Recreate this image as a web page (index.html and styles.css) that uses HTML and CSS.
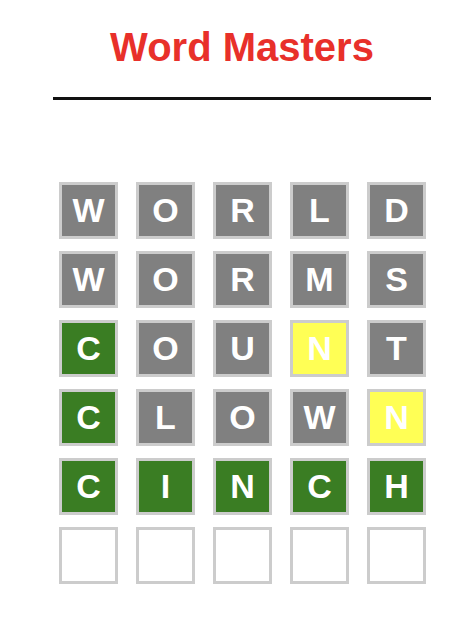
FILE: index.html
```html
<!DOCTYPE html>
<html>
<head>
<meta charset="utf-8">
<link rel="stylesheet" href="styles.css">
</head>
<body>
<div class="page">
  <h1 class="title">Word Masters</h1>
  <div class="rule"></div>
  <div class="board">
    <div class="tile wrong">W</div><div class="tile wrong">O</div><div class="tile wrong">R</div><div class="tile wrong">L</div><div class="tile wrong">D</div>
    <div class="tile wrong">W</div><div class="tile wrong">O</div><div class="tile wrong">R</div><div class="tile wrong">M</div><div class="tile wrong">S</div>
    <div class="tile correct">C</div><div class="tile wrong">O</div><div class="tile wrong">U</div><div class="tile close">N</div><div class="tile wrong">T</div>
    <div class="tile correct">C</div><div class="tile wrong">L</div><div class="tile wrong">O</div><div class="tile wrong">W</div><div class="tile close">N</div>
    <div class="tile correct">C</div><div class="tile correct">I</div><div class="tile correct">N</div><div class="tile correct">C</div><div class="tile correct">H</div>
    <div class="tile"></div><div class="tile"></div><div class="tile"></div><div class="tile"></div><div class="tile"></div>
  </div>
</div>
</body>
</html>
```
FILE: styles.css
```css
html, body {
  margin: 0;
  background: #fff;
  font-family: "Liberation Sans", Arial, sans-serif;
}
.page {
  width: 378px;
  padding: 24px 0 0 53px;
}
.title {
  margin: 0;
  font-size: 40px;
  line-height: 46px;
  font-weight: bold;
  text-align: center;
  color: #e8302a;
}
.rule {
  margin-top: 27px;
  height: 3px;
  background: #111;
}
.board {
  margin: 82px 0 0 6px;
  display: grid;
  grid-template-columns: repeat(5, 59px);
  grid-auto-rows: 57px;
  column-gap: 18px;
  row-gap: 12px;
}
.tile {
  box-sizing: border-box;
  border: 3px solid #ccc;
  display: flex;
  align-items: center;
  justify-content: center;
  font-size: 34px;
  font-weight: bold;
  color: #fff;
}
.wrong { background: #808080; }
.correct { background: #3a7d23; }
.close { background: #ffff55; }
```
